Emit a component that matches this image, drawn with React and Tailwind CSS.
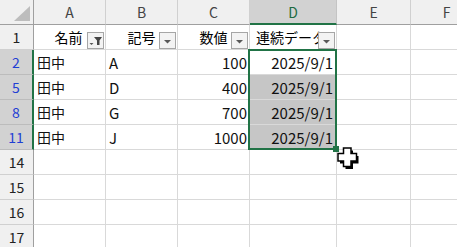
import React from "react";

const cols = [
  { key: "A", w: "w-[72px]" },
  { key: "B", w: "w-[72px]" },
  { key: "C", w: "w-[72px]" },
  { key: "D", w: "w-[87px]" },
  { key: "E", w: "w-[74px]" },
  { key: "F", w: "w-[72px]" },
];

const rows = [
  { n: "2", cells: ["田中", "A", "100", "2025/9/1"] },
  { n: "5", cells: ["田中", "D", "400", "2025/9/1"] },
  { n: "8", cells: ["田中", "G", "700", "2025/9/1"] },
  { n: "11", cells: ["田中", "J", "1000", "2025/9/1"] },
];

const emptyRows = ["14", "15", "16", "17"];

const FilterButton = ({ active }) => (
  <div className="absolute right-[1px] bottom-0 w-[17px] h-[17px] border border-[#a6a6a6] bg-[#f3f3f3] flex items-center justify-center">
    {active ? (
      <svg width="15" height="15" viewBox="0 0 15 15">
        <polygon points="1.5,10 5.5,10 3.5,12" fill="#555" />
        <polygon points="6,4 14,4 11.5,7.5 11.5,12 9,12 9,7.5" fill="#444" />
      </svg>
    ) : (
      <svg width="15" height="15" viewBox="0 0 15 15">
        <polygon points="4,7 11,7 7.5,10.5" fill="#595959" />
      </svg>
    )}
  </div>
);

const RowHead = ({ n, hit }) => (
  <div
    className={`w-[34px] h-[25px] shrink-0 flex items-center justify-center border-b ${
      hit
        ? "bg-[#d2d2d2] text-[#1f3fd4] border-b-[#bcbcbc] border-r-2 border-r-[#217346]"
        : "bg-[#f0f0f0] text-[#222] border-b-[#d0d0d0] border-r border-r-[#9f9f9f]"
    }`}
  >
    {n}
  </div>
);

const CrossCursor = () => (
  <svg className="absolute left-[337px] top-[147px]" width="23" height="23" viewBox="0 0 23 23">
    <path d="M8.5 3.5h7.5v5.5h5.5v7.5h-5.5v5.5H8.5v-5.5H3v-7.5h5.5z" fill="#000" />
    <path d="M6.5 1h7.5v5.5h5.5v7.5h-5.5v5.5H6.5v-5.5H1v-7.5h5.5z" fill="#fff" stroke="#000" strokeWidth="1.5" />
  </svg>
);

const cell = "h-[25px] shrink-0 border-r border-b border-[#d9d9d9]";

export default function App() {
  return (
    <div
      className="relative w-[457px] h-[247px] overflow-hidden bg-white text-[14px] leading-none"
      style={{ fontFamily: '"Noto Sans CJK JP", "Noto Sans", sans-serif' }}
    >
      {/* column headers */}
      <div className="flex">
        <div className="w-[34px] h-[25px] shrink-0 bg-[#f0f0f0] border-r border-b border-[#9f9f9f] relative">
          <svg className="absolute left-[13px] top-[6px]" width="18" height="16" viewBox="0 0 18 16">
            <polygon points="17,0 17,15 1,15" fill="#bdbdbd" />
          </svg>
        </div>
        {cols.map((c) => (
          <div
            key={c.key}
            className={`${c.w} h-[25px] shrink-0 flex items-center justify-center border-r ${
              c.key === "D"
                ? "bg-[#d2d2d2] text-[#1e6b41] border-r-[#c4c4c4] border-b-2 border-b-[#217346]"
                : "bg-[#f0f0f0] text-[#444] border-r-[#d0d0d0] border-b border-b-[#9f9f9f]"
            }`}
          >
            {c.key}
          </div>
        ))}
      </div>

      {/* row 1 : table header */}
      <div className="flex">
        <RowHead n="1" />
        <div className={`relative w-[72px] ${cell} flex items-center justify-center pr-[2px]`}>
          名前
          <FilterButton active />
        </div>
        <div className={`relative w-[72px] ${cell} flex items-center justify-center`}>
          記号
          <FilterButton />
        </div>
        <div className={`relative w-[72px] ${cell} flex items-center justify-center`}>
          数値
          <FilterButton />
        </div>
        <div className={`relative w-[87px] ${cell} flex items-center pl-[6px] overflow-hidden whitespace-nowrap`}>
          連続データ
          <FilterButton />
        </div>
        <div className={`w-[74px] ${cell}`} />
        <div className={`w-[72px] ${cell}`} />
      </div>

      {/* filtered data rows */}
      {rows.map((r, i) => (
        <div key={r.n} className="flex">
          <RowHead n={r.n} hit />
          <div className={`w-[72px] ${cell} flex items-center pl-[3px] text-[#111]`}>{r.cells[0]}</div>
          <div className={`w-[72px] ${cell} flex items-center pl-[3px] text-[15px] text-[#111]`}>{r.cells[1]}</div>
          <div className={`w-[72px] ${cell} flex items-center justify-end pr-[2px] text-[15px] text-[#111]`}>
            {r.cells[2]}
          </div>
          <div
            className={`w-[87px] ${cell} flex items-center justify-end pr-[3px] text-[15px] text-[#111] ${
              i === 0 ? "bg-white" : "bg-[#c6c6c6]"
            }`}
          >
            {r.cells[3]}
          </div>
          <div className={`w-[74px] ${cell}`} />
          <div className={`w-[72px] ${cell}`} />
        </div>
      ))}

      {emptyRows.map((n) => (
        <div key={n} className="flex">
          <RowHead n={n} />
          {cols.map((c) => (
            <div key={c.key} className={`${c.w} ${cell}`} />
          ))}
        </div>
      ))}

      {/* selection frame + fill handle */}
      <div className="absolute left-[248px] top-[49px] w-[89px] h-[101px] border-2 border-[#217346]" />
      <div className="absolute left-[333px] top-[146px] w-[6px] h-[6px] bg-[#217346]" />
      <CrossCursor />
    </div>
  );
}
